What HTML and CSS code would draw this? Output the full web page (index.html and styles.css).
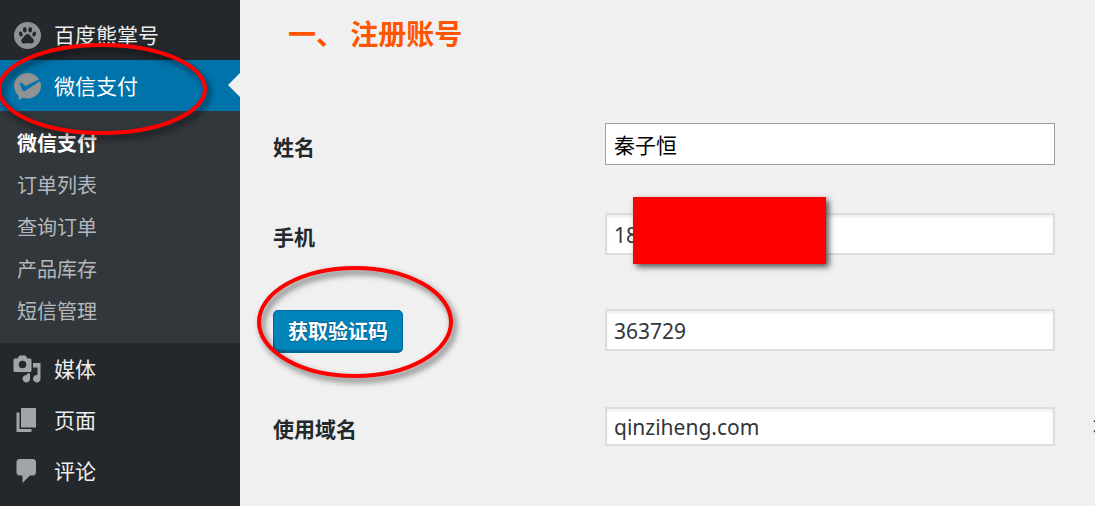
FILE: index.html
```html
<!DOCTYPE html>
<html lang="zh-CN">
<head>
<meta charset="utf-8">
<title>微信支付</title>
<link rel="stylesheet" href="styles.css">
</head>
<body>
<div class="admin">
  <nav class="sidebar">
    <ul class="menu">
      <li><a class="menu-link" href="#">
        <svg class="icon" viewBox="0 0 30 30"><circle class="badge" cx="15.500" cy="15.500" r="13.500"/><g class="paw"><ellipse cx="8.800" cy="14" rx="1.800" ry="2.500" transform="rotate(-18 8.800 14)"/><ellipse cx="12.800" cy="9.800" rx="1.900" ry="2.700"/><ellipse cx="18.200" cy="9.800" rx="1.900" ry="2.700"/><ellipse cx="22.200" cy="14" rx="1.800" ry="2.500" transform="rotate(18 22.200 14)"/><path d="M15.500 14c2 0 2.800 1.900 4.200 3.500 1.500 1.500 2.500 2.600 2 4.200-.7 2.200-2.900 1.900-6.200 1.200-3.300.7-5.500 1-6.200-1.200-.5-1.600.5-2.700 2-4.200 1.400-1.600 2.200-3.500 4.200-3.500z"/></g></svg>
        <span>百度熊掌号</span></a></li>
      <li><a class="menu-link current" href="#">
        <svg class="icon" viewBox="0 0 30 30"><path class="badge" d="M15.500 2c7.500 0 13.500 5.700 13.500 12.800s-6 12.700-13.500 12.700c-1.700 0-3.300-.2-4.800-.7L6.500 29.300l.3-4.300C4 22.700 2 19.100 2 14.800 2 7.700 8 2 15.500 2z"/><path class="tick" d="M7.500 12.300c.8-.8 1.500-.8 2.300-.2l3 2.400c.6.400 1.200.4 1.900.1L27.600 8l.9 2-15.700 10c-1 .6-1.800.5-2.300-.5z"/></svg>
        <span>微信支付</span></a>
        <ul class="submenu">
          <li><a class="sub-link active" href="#">微信支付</a></li>
          <li><a class="sub-link" href="#">订单列表</a></li>
          <li><a class="sub-link" href="#">查询订单</a></li>
          <li><a class="sub-link" href="#">产品库存</a></li>
          <li><a class="sub-link" href="#">短信管理</a></li>
        </ul>
      </li>
      <li><a class="menu-link" href="#">
        <svg class="icon" viewBox="0 0 20 20"><path class="glyph" d="M13 11V4c0-.55-.45-1-1-1h-1.670L9 1H5L3.670 3H2c-.55 0-1 .45-1 1v7c0 .55.45 1 1 1h10c.55 0 1-.45 1-1zM7 4.500a2.500 2.500 0 1 1 0 5 2.500 2.500 0 0 1 0-5zM14 6h5v10.500a2.500 2.500 0 1 1-2-2.450V9h-3V6zm-4 8.050V13h2v3.500a2.500 2.500 0 1 1-2-2.450z"/></svg>
        <span>媒体</span></a></li>
      <li><a class="menu-link" href="#">
        <svg class="icon" viewBox="0 0 20 20"><path class="glyph" d="M6 15V2h10v13H6zm-1 1h8v2H3V5h2v11z"/></svg>
        <span>页面</span></a></li>
      <li><a class="menu-link" href="#">
        <svg class="icon" viewBox="0 0 20 20"><path class="glyph" d="M5 2h9c1.100 0 2 .9 2 2v7c0 1.100-.9 2-2 2h-2l-5 5v-5H5c-1.100 0-2-.9-2-2V4c0-1.100.9-2 2-2z"/></svg>
        <span>评论</span></a></li>
    </ul>
    <svg class="ring ring-menu" viewBox="0 0 210 92"><ellipse cx="104" cy="46" rx="103" ry="44"/></svg>
  </nav>
  <main class="content">
    <h1 class="title">一、 注册账号</h1>
    <form class="form">
      <div class="row">
        <label class="label" for="name">姓名</label>
        <input class="field focus" id="name" type="text" value="秦子恒">
      </div>
      <div class="row">
        <label class="label" for="phone">手机</label>
        <div class="masked"><input class="field" id="phone" type="text" value="18"><span class="mask"></span></div>
      </div>
      <div class="row code-row">
        <div class="action"><button class="button" type="button">获取验证码</button>
          <svg class="ring ring-button" viewBox="0 0 196 112"><ellipse cx="98" cy="56" rx="96" ry="54"/></svg></div>
        <input class="field" id="code" type="text" value="363729" aria-label="验证码">
      </div>
      <div class="row">
        <label class="label short-label" for="domain">使用域名</label>
        <input class="field short" id="domain" type="text" value="qinziheng.com">
        <span class="note">填写</span>
      </div>
    </form>
  </main>
</div>
</body>
</html>
```
FILE: styles.css
```css
* { box-sizing: border-box; }
body {
  margin: 0;
  background: #f0f0f0;
  color: #23282d;
  font: 21px/36px "Noto Sans", "Noto Sans CJK SC", sans-serif;
}
ul { margin: 0; padding: 0; list-style: none; }
a { text-decoration: none; }
.admin { display: flex; min-height: 100vh; overflow: hidden; }

.sidebar { position: relative; flex: 0 0 240px; background: #23282d; }
.menu { padding-top: 9px; }
.menu-link {
  display: flex;
  align-items: center;
  gap: 12px;
  height: 51px;
  padding-left: 12px;
  color: #eee;
}
.menu-link.current { position: relative; background: #0073aa; color: #fff; }
.menu-link.current::after {
  content: "";
  position: absolute;
  right: 0;
  top: 13px;
  border: 12px solid transparent;
  border-left: 0;
  border-right-color: #f0f0f0;
}
.icon { width: 30px; height: 30px; flex: none; }
.glyph { fill: #a0a5aa; fill-rule: evenodd; }
.badge { fill: #919293; }
.paw { fill: #23282d; }
.tick { fill: #0073aa; }
.submenu { padding: 12px 0 10px; background: #32373c; }
.sub-link {
  display: block;
  padding-left: 17px;
  color: #b4b9be;
  font-size: 20px;
  line-height: 42px;
}
.sub-link.active { color: #fff; font-weight: 700; }

.content { flex: 1; min-width: 0; padding: 15px 0 48px 33px; }
.title {
  margin: 0 0 72px;
  padding-left: 15px;
  color: #ff5500;
  font-size: 28px;
  line-height: 36px;
  font-family: "Noto Sans CJK SC", sans-serif;
}
.form { display: flex; flex-direction: column; gap: 48px; }
.row { display: grid; grid-template-columns: 332px 1fr 40px; }
.label { padding-top: 6px; font-weight: 700; }
.short-label { padding-top: 4px; }
.code-row { margin: 6px 0; }
.field {
  width: 100%;
  height: 42px;
  padding: 2px 7px 0;
  border: 2px solid #ddd;
  background: #fff;
  box-shadow: inset 0 2px 3px rgba(0, 0, 0, 0.07);
  color: #32373c;
  font: inherit;
}
.field.focus { padding: 0 8px; border: 1px solid #a0a0a0; box-shadow: none; color: #000; }
.field.short { height: 39px; padding-top: 0; }
.note { padding-left: 38px; overflow: hidden; white-space: nowrap; height: 39px; }
.masked, .action { position: relative; }
.mask {
  position: absolute;
  left: 28px;
  top: -16px;
  width: 193px;
  height: 67px;
  background: #f00;
  box-shadow: 3px 3px 6px rgba(0, 0, 0, 0.65);
}
.button {
  display: block;
  height: 43px;
  margin-top: 1px;
  padding: 2px 14px 0;
  border: 1px solid #006799;
  border-bottom-width: 3px;
  border-radius: 5px;
  background: #0085ba;
  color: #fff;
  font: 700 20px/36px "Noto Sans", "Noto Sans CJK SC", sans-serif;
  text-shadow: 0 -1px 1px #006799, 1px 0 1px #006799, 0 1px 1px #006799;
}

.ring {
  position: absolute;
  fill: none;
  stroke: #f00;
  stroke-width: 4px;
  overflow: visible;
  filter: drop-shadow(3px 4px 3px rgba(0, 0, 0, 0.6));
  pointer-events: none;
}
.ring-menu { left: -2px; top: 43px; width: 210px; height: 92px; }
.ring-button { left: -16px; top: -43px; width: 196px; height: 112px; }
```
